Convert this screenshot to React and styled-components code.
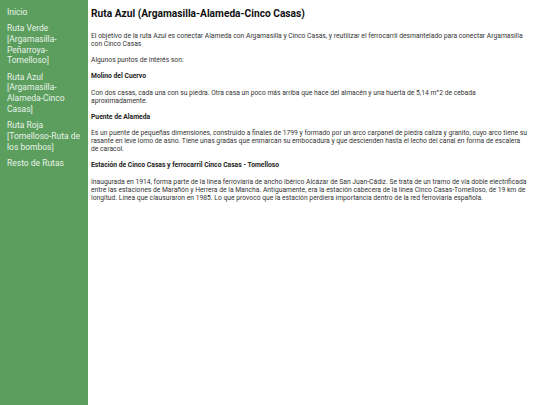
import styled, { createGlobalStyle } from "styled-components";

const GlobalStyle = createGlobalStyle`
  html, body {
    margin: 0;
    padding: 0;
    height: 100%;
    background: #ffffff;
    font-family: Roboto, "Liberation Sans", sans-serif;
  }
  #root {
    height: 100%;
  }
`;

const Layout = styled.div`
  display: flex;
  min-height: 405px;
`;

const Sidebar = styled.nav`
  width: 88px;
  flex-shrink: 0;
  background-color: #5b9e5e;
  padding: 6.7px 2px 0 7px;
  box-sizing: border-box;
`;

const NavList = styled.ul`
  list-style: none;
  margin: 0;
  padding: 0;
  display: flex;
  flex-direction: column;
  gap: 5.5px;
`;

const NavItem = styled.li`
  a {
    color: #e8f3e8;
    text-decoration: none;
    font-size: 8.5px;
    line-height: 10.8px;
    display: block;
  }
`;

const Content = styled.main`
  flex: 1;
  padding: 7px 12px 0 3px;
  color: #333;
`;

const Title = styled.h1`
  font-size: 10.2px;
  font-weight: bold;
  margin: 0 0 11px 0;
  line-height: 14px;
  color: #111;
`;

const Text = styled.p`
  font-size: 6.75px;
  line-height: 8px;
  margin: 0 0 8px 0;
`;

const Heading = styled.h3`
  font-size: 6.75px;
  line-height: 8px;
  font-weight: bold;
  color: #222;
  margin: 0 0 8.5px 0;
`;

const links = [
  "Inicio",
  "Ruta Verde [Argamasilla-Peñarroya-Tomelloso]",
  "Ruta Azul [Argamasilla-Alameda-Cinco Casas]",
  "Ruta Roja [Tomelloso-Ruta de los bombos]",
  "Resto de Rutas",
];

export default function App() {
  return (
    <>
      <GlobalStyle />
      <Layout>
        <Sidebar>
          <NavList>
            {links.map((l) => (
              <NavItem key={l}>
                <a href="#">{l}</a>
              </NavItem>
            ))}
          </NavList>
        </Sidebar>
        <Content>
          <Title>Ruta Azul (Argamasilla-Alameda-Cinco Casas)</Title>
          <Text>
            El objetivo de la ruta Azul es conectar Alameda con Argamasilla y Cinco Casas, y reutilizar el
            ferrocarril desmantelado para conectar Argamasilla con Cinco Casas
          </Text>
          <Text>Algunos puntos de interés son:</Text>
          <Heading>Molino del Cuervo</Heading>
          <Text>
            Con dos casas, cada una con su piedra. Otra casa un poco más arriba que hace del almacén y una
            huerta de 5,14 m^2 de cebada aproximadamente.
          </Text>
          <Heading>Puente de Alameda</Heading>
          <Text>
            Es un puente de pequeñas dimensiones, construido a finales de 1799 y formado por un arco carpanel
            de piedra caliza y granito, cuyo arco tiene su rasante en leve lomo de asno. Tiene unas gradas que
            enmarcan su embocadura y que descienden hasta el lecho del canal en forma de escalera de caracol.
          </Text>
          <Heading>Estación de Cinco Casas y ferrocarril Cinco Casas - Tomelloso</Heading>
          <Text>
            Inaugurada en 1914, forma parte de la línea ferroviaria de ancho ibérico Alcázar de San
            Juan-Cádiz. Se trata de un tramo de vía doble electrificada entre las estaciones de Marañón y
            Herrera de la Mancha. Antiguamente, era la estación cabecera de la línea Cinco Casas-Tomelloso, de
            19 km de longitud. Línea que clausuraron en 1985. Lo que provocó que la estación perdiera
            importancia dentro de la red ferroviaria española.
          </Text>
        </Content>
      </Layout>
    </>
  );
}
